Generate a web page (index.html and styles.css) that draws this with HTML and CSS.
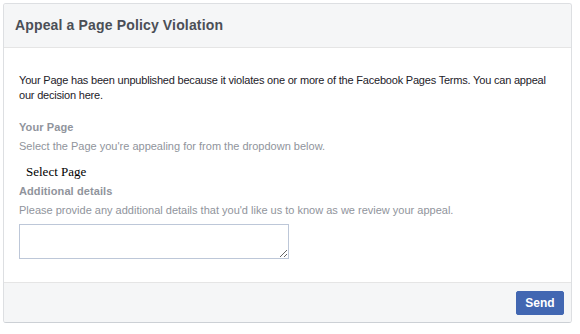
FILE: index.html
```html
<!DOCTYPE html>
<html lang="en">
<head>
<meta charset="utf-8">
<title>Appeal a Page Policy Violation</title>
<link rel="stylesheet" href="styles.css">
</head>
<body>
<div class="dialog">
  <div class="dialog-header">
    <h2 class="dialog-title">Appeal a Page Policy Violation</h2>
  </div>
  <div class="dialog-body">
    <p class="intro">Your Page has been unpublished because it violates one or more of the Facebook Pages Terms. You can appeal our decision here.</p>
    <div class="field-label first">Your Page</div>
    <div class="field-help">Select the Page you're appealing for from the dropdown below.</div>
    <div class="page-select">Select Page</div>
    <div class="field-label">Additional details</div>
    <div class="field-help">Please provide any additional details that you'd like us to know as we review your appeal.</div>
    <textarea class="details"></textarea>
  </div>
  <div class="dialog-footer">
    <button class="send-btn" type="button">Send</button>
  </div>
</div>
</body>
</html>
```

FILE: styles.css
```css
html, body {
  background: #ffffff;
}
body {
  margin: 3px;
  font-family: "Liberation Sans", Arial, Helvetica, sans-serif;
}
.dialog {
  width: 569px;
  box-sizing: border-box;
  border: 1px solid #dddfe2;
  border-bottom-color: #ccd0d5;
  border-radius: 3px;
  background: #ffffff;
  overflow: hidden;
}
.dialog-header {
  background: #f5f6f7;
  border-bottom: 1px solid #e5e5e5;
  padding: 12px 11px 13px;
}
.dialog-title {
  margin: 0;
  font-size: 14px;
  line-height: 18px;
  font-weight: bold;
  color: #4b4f56;
  letter-spacing: 0.15px;
}
.dialog-body {
  padding: 25px 15px 23px;
}
.intro {
  margin: 0;
  font-size: 11px;
  line-height: 15px;
  color: #1d2129;
  letter-spacing: -0.2px;
}
.field-label {
  margin-top: 2px;
  font-size: 11px;
  line-height: 16px;
  font-weight: bold;
  color: #90949c;
  letter-spacing: 0.1px;
}
.field-label.first {
  margin-top: 16px;
}
.field-help {
  margin-top: 3px;
  font-size: 11px;
  line-height: 16px;
  color: #90949c;
}
.page-select {
  margin-top: 9px;
  padding-left: 7px;
  font-family: "Liberation Serif", "Times New Roman", serif;
  font-size: 13px;
  line-height: 18px;
  color: #000000;
}
.details {
  display: block;
  margin: 6px 0 0;
  width: 270px;
  height: 35px;
  box-sizing: border-box;
  border: 1px solid #bdc7d8;
  padding: 3px;
  font-family: "Liberation Sans", Arial, sans-serif;
  font-size: 12px;
}
.dialog-footer {
  background: #f5f6f7;
  border-top: 1px solid #e5e5e5;
  height: 39px;
  padding: 0 7px 0 0;
  display: flex;
  align-items: center;
  justify-content: flex-end;
}
.send-btn {
  height: 24px;
  width: 48px;
  padding: 0;
  border: 1px solid #4267b2;
  border-radius: 2px;
  background: #4267b2;
  color: #ffffff;
  font-family: "Liberation Sans", Arial, sans-serif;
  font-size: 12px;
  font-weight: bold;
  line-height: 22px;
}
```
